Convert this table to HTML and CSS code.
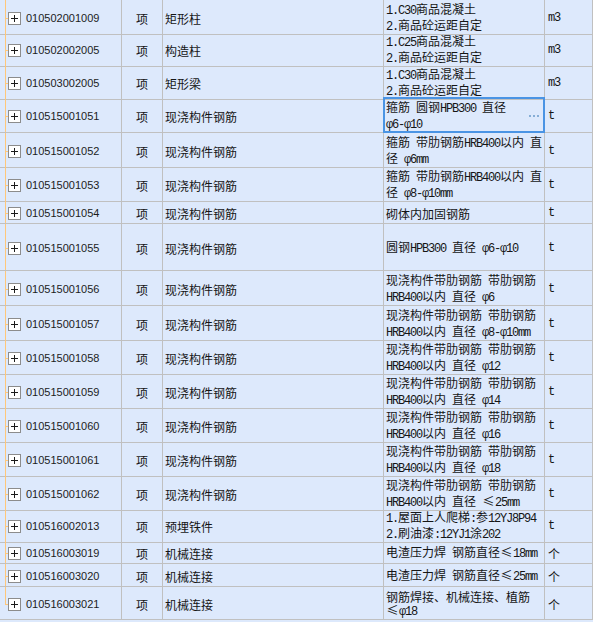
FILE: index.html
```html
<!DOCTYPE html>
<html lang="zh-CN">
<head>
<meta charset="utf-8">
<title>清单</title>
<link rel="stylesheet" href="styles.css">
</head>
<body>
<div class="grid">
  <div class="row h32">
    <div class="c code"><span class="box"></span>010502001009</div>
    <div class="c q">项</div>
    <div class="c name">矩形柱</div>
    <div class="c desc l14"><span class="t"><span class="a">1.C30</span>商品混凝土<br><span class="a">2.</span>商品砼运距自定</span></div>
    <div class="c unit"><span class="a">m3</span></div>
  </div>
  <div class="row h33">
    <div class="c code"><span class="box"></span>010502002005</div>
    <div class="c q">项</div>
    <div class="c name">构造柱</div>
    <div class="c desc l14"><span class="t"><span class="a">1.C25</span>商品混凝土<br><span class="a">2.</span>商品砼运距自定</span></div>
    <div class="c unit"><span class="a">m3</span></div>
  </div>
  <div class="row h33">
    <div class="c code"><span class="box"></span>010503002005</div>
    <div class="c q">项</div>
    <div class="c name">矩形梁</div>
    <div class="c desc l14"><span class="t"><span class="a">1.C30</span>商品混凝土<br><span class="a">2.</span>商品砼运距自定</span></div>
    <div class="c unit"><span class="a">m3</span></div>
  </div>
  <div class="row h35">
    <div class="c code"><span class="box"></span>010515001051</div>
    <div class="c q">项</div>
    <div class="c name">现浇构件钢筋</div>
    <div class="c desc sel"><span class="t">箍筋<span class="a"> </span>圆钢<span class="a">HPB300 </span>直径<br><span class="a">φ6-φ10</span></span><span class="dots"><i></i><i></i><i></i></span></div>
    <div class="c unit"><span class="a">t</span></div>
  </div>
  <div class="row h34">
    <div class="c code"><span class="box"></span>010515001052</div>
    <div class="c q">项</div>
    <div class="c name">现浇构件钢筋</div>
    <div class="c desc"><span class="t">箍筋<span class="a"> </span>带肋钢筋<span class="a">HRB400</span>以内<span class="a"> </span>直<br>径<span class="a"> φ6mm</span></span></div>
    <div class="c unit"><span class="a">t</span></div>
  </div>
  <div class="row h34">
    <div class="c code"><span class="box"></span>010515001053</div>
    <div class="c q">项</div>
    <div class="c name">现浇构件钢筋</div>
    <div class="c desc"><span class="t">箍筋<span class="a"> </span>带肋钢筋<span class="a">HRB400</span>以内<span class="a"> </span>直<br>径<span class="a"> φ8-φ10mm</span></span></div>
    <div class="c unit"><span class="a">t</span></div>
  </div>
  <div class="row h23">
    <div class="c code"><span class="box"></span>010515001054</div>
    <div class="c q">项</div>
    <div class="c name">现浇构件钢筋</div>
    <div class="c desc"><span class="t">砌体内加固钢筋</span></div>
    <div class="c unit"><span class="a">t</span></div>
  </div>
  <div class="row h47">
    <div class="c code"><span class="box"></span>010515001055</div>
    <div class="c q">项</div>
    <div class="c name">现浇构件钢筋</div>
    <div class="c desc"><span class="t">圆钢<span class="a">HPB300 </span>直径<span class="a"> φ6-φ10</span></span></div>
    <div class="c unit"><span class="a">t</span></div>
  </div>
  <div class="row h35">
    <div class="c code"><span class="box"></span>010515001056</div>
    <div class="c q">项</div>
    <div class="c name">现浇构件钢筋</div>
    <div class="c desc"><span class="t">现浇构件带肋钢筋<span class="a"> </span>带肋钢筋<br><span class="a">HRB400</span>以内<span class="a"> </span>直径<span class="a"> φ6</span></span></div>
    <div class="c unit"><span class="a">t</span></div>
  </div>
  <div class="row h34">
    <div class="c code"><span class="box"></span>010515001057</div>
    <div class="c q">项</div>
    <div class="c name">现浇构件钢筋</div>
    <div class="c desc"><span class="t">现浇构件带肋钢筋<span class="a"> </span>带肋钢筋<br><span class="a">HRB400</span>以内<span class="a"> </span>直径<span class="a"> φ8-φ10mm</span></span></div>
    <div class="c unit"><span class="a">t</span></div>
  </div>
  <div class="row h34">
    <div class="c code"><span class="box"></span>010515001058</div>
    <div class="c q">项</div>
    <div class="c name">现浇构件钢筋</div>
    <div class="c desc"><span class="t">现浇构件带肋钢筋<span class="a"> </span>带肋钢筋<br><span class="a">HRB400</span>以内<span class="a"> </span>直径<span class="a"> φ12</span></span></div>
    <div class="c unit"><span class="a">t</span></div>
  </div>
  <div class="row h34">
    <div class="c code"><span class="box"></span>010515001059</div>
    <div class="c q">项</div>
    <div class="c name">现浇构件钢筋</div>
    <div class="c desc"><span class="t">现浇构件带肋钢筋<span class="a"> </span>带肋钢筋<br><span class="a">HRB400</span>以内<span class="a"> </span>直径<span class="a"> φ14</span></span></div>
    <div class="c unit"><span class="a">t</span></div>
  </div>
  <div class="row h34">
    <div class="c code"><span class="box"></span>010515001060</div>
    <div class="c q">项</div>
    <div class="c name">现浇构件钢筋</div>
    <div class="c desc"><span class="t">现浇构件带肋钢筋<span class="a"> </span>带肋钢筋<br><span class="a">HRB400</span>以内<span class="a"> </span>直径<span class="a"> φ16</span></span></div>
    <div class="c unit"><span class="a">t</span></div>
  </div>
  <div class="row h34">
    <div class="c code"><span class="box"></span>010515001061</div>
    <div class="c q">项</div>
    <div class="c name">现浇构件钢筋</div>
    <div class="c desc"><span class="t">现浇构件带肋钢筋<span class="a"> </span>带肋钢筋<br><span class="a">HRB400</span>以内<span class="a"> </span>直径<span class="a"> φ18</span></span></div>
    <div class="c unit"><span class="a">t</span></div>
  </div>
  <div class="row h32">
    <div class="c code"><span class="box"></span>010515001062</div>
    <div class="c q">项</div>
    <div class="c name">现浇构件钢筋</div>
    <div class="c desc"><span class="t">现浇构件带肋钢筋<span class="a"> </span>带肋钢筋<br><span class="a">HRB400</span>以内<span class="a"> </span>直径<span class="a"> </span><span class="le">≤</span><span class="a">25mm</span></span></div>
    <div class="c unit"><span class="a">t</span></div>
  </div>
  <div class="row h33">
    <div class="c code"><span class="box"></span>010516002013</div>
    <div class="c q">项</div>
    <div class="c name">预埋铁件</div>
    <div class="c desc l14"><span class="t"><span class="a">1.</span>屋面上人爬梯<span class="a">:</span>参<span class="a">12YJ8P94</span><br><span class="a">2.</span>刷油漆<span class="a">:12YJ1</span>涂<span class="a">202</span></span></div>
    <div class="c unit"><span class="a">t</span></div>
  </div>
  <div class="row h23">
    <div class="c code"><span class="box"></span>010516003019</div>
    <div class="c q">项</div>
    <div class="c name">机械连接</div>
    <div class="c desc"><span class="t">电渣压力焊<span class="a"> </span>钢筋直径<span class="le">≤</span><span class="a">18mm</span></span></div>
    <div class="c unit">个</div>
  </div>
  <div class="row h23">
    <div class="c code"><span class="box"></span>010516003020</div>
    <div class="c q">项</div>
    <div class="c name">机械连接</div>
    <div class="c desc"><span class="t">电渣压力焊<span class="a"> </span>钢筋直径<span class="le">≤</span><span class="a">25mm</span></span></div>
    <div class="c unit">个</div>
  </div>
  <div class="row h33 last">
    <div class="c code"><span class="box"></span>010516003021</div>
    <div class="c q">项</div>
    <div class="c name">机械连接</div>
    <div class="c desc"><span class="t">钢筋焊接、机械连接、植筋<br><span class="le">≤</span><span class="a">φ18</span></span></div>
    <div class="c unit">个</div>
  </div>
</div>
</body>
</html>
```

FILE: styles.css
```css
* {
  box-sizing: border-box;
}

html,
body {
  margin: 0;
  padding: 0;
  background: #dde9fc;
}

body {
  width: 593px;
  height: 622px;
  overflow: hidden;
  font-family: "Noto Sans CJK SC", "Liberation Sans", sans-serif;
  font-size: 12px;
  color: #151515;
}

.grid {
  display: flex;
  flex-direction: column;
}

.row {
  display: grid;
  grid-template-columns: 122px 41px 221px 161px 48px;
}

.h23 { height: 23px; }
.h32 { height: 32px; }
.h33 { height: 33px; }
.h34 { height: 34px; }
.h35 { height: 35px; }
.h47 { height: 47px; }

.c {
  display: flex;
  align-items: center;
  border-right: 1px solid #c0c0c0;
  border-bottom: 1px solid #c0c0c0;
  white-space: nowrap;
  line-height: 13px;
  padding-top: 2px;
  min-width: 0;
}

.code {
  padding-left: 8px;
  font-family: "Liberation Sans", "DejaVu Sans", sans-serif;
  font-size: 11px;
  color: #1c1c1c;
  background:
    linear-gradient(#ffc77a, #ffc77a) 5px 0 / 1px 100% no-repeat,
    linear-gradient(#ffc77a, #ffc77a) 5px calc(50% + 1px) / 3px 1px no-repeat;
}

.last .code {
  background:
    linear-gradient(#ffc77a, #ffc77a) 5px 0 / 1px calc(50% + 2px) no-repeat,
    linear-gradient(#ffc77a, #ffc77a) 5px calc(50% + 1px) / 3px 1px no-repeat;
}

.box {
  flex: none;
  width: 13px;
  height: 13px;
  margin-right: 5px;
  border: 1px solid #8c8c8c;
  background:
    linear-gradient(#1a1a1a, #1a1a1a) center / 7px 1px no-repeat,
    linear-gradient(#1a1a1a, #1a1a1a) center / 1px 7px no-repeat,
    #ffffff;
}

.q {
  justify-content: center;
}

.name {
  padding-left: 2px;
}

.desc {
  padding-left: 2px;
}

.l14 { line-height: 14px; }

.t {
  display: block;
}

.a {
  font-family: "Liberation Mono", "DejaVu Sans Mono", monospace;
  font-size: 12px;
  letter-spacing: -1.2px;
}

.le {
  display: inline-block;
  width: 13px;
  text-align: center;
}

.unit {
  padding-left: 3px;
}

.sel {
  position: relative;
}

.sel::after {
  content: "";
  position: absolute;
  inset: -1px;
  border: 2px solid #4a94e4;
  pointer-events: none;
}

.dots {
  display: flex;
  gap: 2px;
  margin-left: auto;
  margin-right: 5px;
}

.dots i {
  display: block;
  width: 2px;
  height: 2px;
  background: #86aed6;
}
```
